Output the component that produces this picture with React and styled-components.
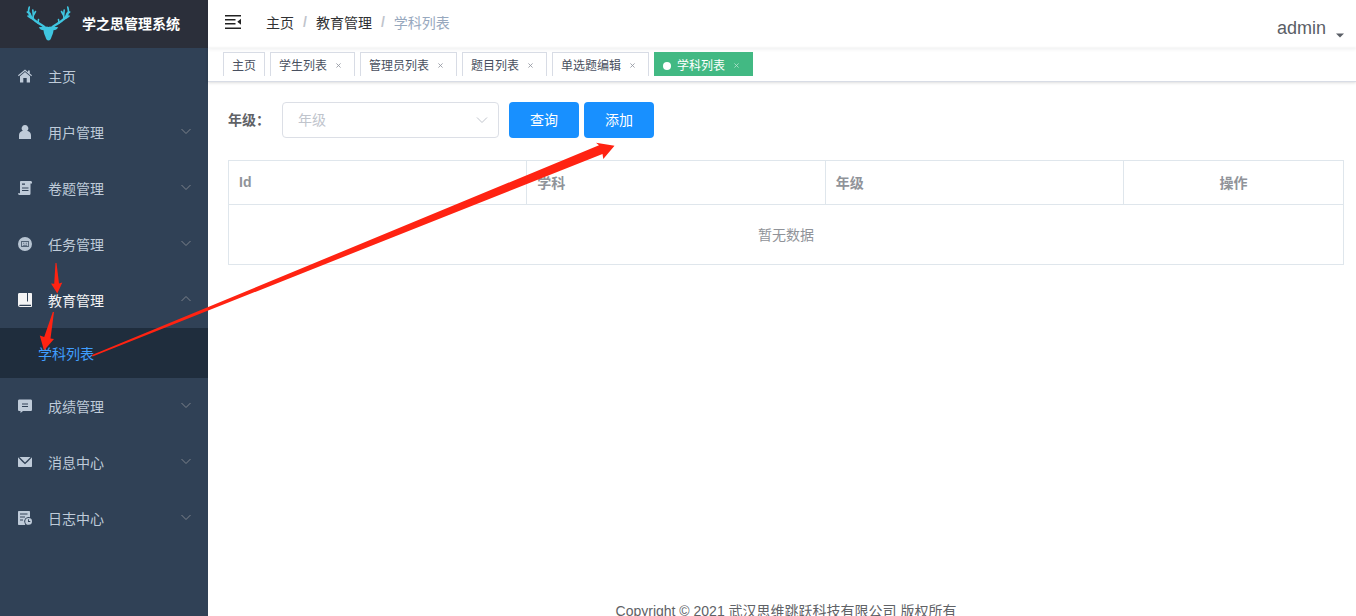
import { useState } from 'react'
import styled, { createGlobalStyle, ThemeProvider } from 'styled-components'

const theme = {
    colour: {
        sidebar: '#304156',
        sidebarDark: '#1f2d3d',
        logoBar: '#2b2f3a',
        menuText: '#bfcbd9',
        menuOpen: '#f4f4f5',
        link: '#409eff',
        primary: '#1890ff',
        tag: '#42b983',
        border: '#dfe6ec',
        inputBorder: '#dcdfe6',
        tagBorder: '#d8dce5',
        text: '#606266',
        muted: '#909399',
        placeholder: '#c0c4cc',
        arrow: '#ff2312',
    },
    sidebarWidth: '208px',
}

const GlobalStyle = createGlobalStyle`
    * {
        box-sizing: border-box;
    }
    body {
        margin: 0;
        background: #fff;
        color: #606266;
        font-family: 'Liberation Sans', 'Noto Sans CJK SC', sans-serif;
        font-size: 14px;
    }
    a {
        color: inherit;
        text-decoration: none;
    }
    button,
    select {
        font-family: inherit;
        font-size: 14px;
        cursor: pointer;
    }
`

const Layout = styled.div`
    position: relative;
    display: flex;
    height: 100vh;
    overflow: hidden;
`

//////////////////////////

// Sidebar

//////////////////////////

const Sidebar = styled.aside`
    flex: none;
    width: ${({ theme }) => theme.sidebarWidth};
    background: ${({ theme }) => theme.colour.sidebar};
`

const Brand = styled.a`
    display: flex;
    align-items: center;
    gap: 10px;
    height: 48px;
    padding-left: 24px;
    background: ${({ theme }) => theme.colour.logoBar};
    color: #fff;
    font-weight: bold;

    svg {
        width: 48px;
        height: 40px;
    }
    span {
        padding-bottom: 3px;
    }
`

const Menu = styled.ul`
    margin: 0;
    padding: 0;
    list-style: none;
`

const MenuButton = styled.button`
    display: flex;
    align-items: center;
    width: 100%;
    height: 56px;
    padding: 0 16px 0 18px;
    border: 0;
    background: none;
    color: ${({ theme, $open }) =>
        $open ? theme.colour.menuOpen : theme.colour.menuText};
    text-align: left;

    span {
        flex: 1;
        margin-left: 16px;
    }
`

const MenuIcon = styled.svg`
    flex: none;
    width: 14px;
    height: 14px;
    fill: currentColor;
`

const Chevron = styled.svg`
    flex: none;
    width: 12px;
    height: 12px;
    fill: none;
    stroke: ${({ theme }) => theme.colour.muted};
    stroke-width: 1;
    transform: ${({ $open }) => ($open ? 'rotate(180deg)' : 'none')};
`

const MenuChevron = styled(Chevron)`
    margin-bottom: 3px;
    opacity: 0.8;
`

const SubLink = styled.a`
    display: flex;
    align-items: center;
    height: 50px;
    padding-left: 38px;
    background: ${({ theme }) => theme.colour.sidebarDark};
    color: ${({ theme }) => theme.colour.link};
`

//////////////////////////

// Top bars

//////////////////////////

const Main = styled.div`
    flex: 1;
    min-width: 0;
`

const Navbar = styled.header`
    display: flex;
    align-items: center;
    height: 48px;
    padding: 0 12px 4px 17px;
    box-shadow: 0 1px 4px rgba(0, 21, 41, 0.08);
`

const Hamburger = styled.button`
    display: flex;
    padding: 0;
    border: 0;
    background: none;
    color: #222;

    svg {
        width: 16px;
        height: 16px;
        fill: currentColor;
    }
`

const Breadcrumb = styled.nav`
    display: flex;
    flex: 1;
    align-items: center;
    gap: 9px;
    margin-left: 25px;
    color: #303133;

    i {
        color: ${({ theme }) => theme.colour.placeholder};
        font-style: normal;
        font-weight: bold;
    }
    span {
        color: #97a8be;
    }
`

const UserMenu = styled.button`
    display: flex;
    align-items: flex-end;
    gap: 10px;
    padding: 12px 0 0;
    border: 0;
    background: none;
    color: #5a5e66;

    span {
        font-size: 18px;
        line-height: 20px;
    }
    svg {
        width: 8px;
        height: 5px;
        fill: currentColor;
    }
`

const TagsBar = styled.div`
    display: flex;
    gap: 5px;
    height: 34px;
    padding: 4px 15px 0;
    border-bottom: 1px solid ${({ theme }) => theme.colour.tagBorder};
    box-shadow:
        0 1px 3px 0 rgba(0, 0, 0, 0.12),
        0 0 3px 0 rgba(0, 0, 0, 0.04);
`

const Tag = styled.div`
    display: flex;
    align-items: center;
    height: 24px;
    padding: 2px 8px 0;
    border: 1px solid
        ${({ theme, $active }) =>
            $active ? theme.colour.tag : theme.colour.tagBorder};
    border-bottom: 0;
    background: ${({ theme, $active }) => ($active ? theme.colour.tag : '#fff')};
    color: ${({ $active }) => ($active ? '#fff' : '#495060')};
    font-size: 12px;
    line-height: 22px;
    white-space: nowrap;
`

const Dot = styled.i`
    width: 8px;
    height: 8px;
    margin-right: 6px;
    border-radius: 50%;
    background: #fff;
`

const CloseButton = styled.button`
    display: flex;
    align-items: center;
    justify-content: center;
    width: 16px;
    height: 16px;
    margin-left: 3px;
    padding: 0;
    border: 0;
    background: none;
    color: inherit;
    opacity: 0.6;

    svg {
        width: 5px;
        height: 5px;
        stroke: currentColor;
    }
`

//////////////////////////

// Page content

//////////////////////////

const Content = styled.main`
    min-height: calc(100vh - 99px);
    padding: 20px 12px 0 20px;
`

const SearchForm = styled.form`
    display: flex;
    align-items: center;
    margin-bottom: 22px;

    label {
        width: 54px;
        padding-bottom: 2px;
        font-weight: bold;
    }
`

const SelectBox = styled.div`
    position: relative;
    width: 217px;
    margin-right: 10px;

    select {
        width: 100%;
        height: 36px;
        padding: 0 30px 0 15px;
        appearance: none;
        border: 1px solid ${({ theme }) => theme.colour.inputBorder};
        border-radius: 4px;
        background: #fff;
        color: ${({ theme }) => theme.colour.placeholder};
    }
    svg {
        position: absolute;
        top: 12px;
        right: 11px;
        stroke: ${({ theme }) => theme.colour.placeholder};
        pointer-events: none;
    }
`

const PrimaryButton = styled.button`
    width: 70px;
    height: 36px;
    margin-right: 5px;
    padding: 0 0 2px;
    border: 0;
    border-radius: 4px;
    background: ${({ theme }) => theme.colour.primary};
    color: #fff;
`

const Table = styled.table`
    width: 100%;
    table-layout: fixed;
    border-collapse: collapse;
    color: ${({ theme }) => theme.colour.muted};

    th,
    td {
        padding: 0 10px 2px;
        border: 1px solid ${({ theme }) => theme.colour.border};
    }
    th {
        height: 44px;
        text-align: left;
    }
    th:last-child {
        width: 220px;
        text-align: center;
    }
    td {
        height: 60px;
        text-align: center;
    }
`

const Footer = styled.footer`
    padding-left: 8px;
    line-height: 24px;
    text-align: center;
`

const Arrows = styled.svg`
    position: absolute;
    top: 0;
    left: 0;
    width: 640px;
    height: 380px;
    fill: ${({ theme }) => theme.colour.arrow};
    pointer-events: none;
`

const icons = {
    home: (
        <>
            <path d="M7 .4 10 2.9V1.4h1.8v3L14 6.3l-.7.9L7 1.9.7 7.2 0 6.3z" />
            <path d="M7 3 12 7.2V13.4H8.7V9H5.3v4.4H2V7.2z" />
        </>
    ),
    user: (
        <path d="M7 0a3.3 3.3 0 0 1 2.2 5.8C11.8 6.5 13 8 13 10.500V14H1v-3.500C1 8 2.200 6.500 4.800 5.800A3.300 3.300 0 0 1 7 0z" />
    ),
    paper: (
        <path
            fillRule="evenodd"
            d="M3 0h9.500C13.500 0 14 .6 14 1.500V2.500h-1.500v10c0 1-.6 1.500-1.500 1.500H1.500C.5 14 0 13.500 0 12.300h2V1.200C2 .5 2.300 0 3 0zM4 2.500v1.200h3V2.500zM4 6.500v1h6.500v-1zM4 9v1h6.500V9z"
        />
    ),
    task: (
        <>
            <path
                fillRule="evenodd"
                d="M7 0a7 7 0 1 1 0 14A7 7 0 0 1 7 0zM3.300 4v6h7.400V4zm.7.700h6v4.600H4z"
                opacity=".95"
            />
            <path
                d="M5 5.800h1.300v1H5zM7.700 5.800H9v1H7.700zM4.800 8.400l1.400-1 1 .8 1-1 1 1.200v.5H4.800z"
                fill="#304156"
                opacity=".6"
            />
        </>
    ),
    book: (
        <path
            fillRule="evenodd"
            d="M1.500 0H13c.6 0 1 .4 1 1v12.200c0 .5-.3.800-.8.800H2.200C.8 14 0 13.200 0 12V1.500C0 .5.500 0 1.500 0zM9 0v8.500h1V0zM1.800 11.700c-.8 0-.8 1.200 0 1.200H13v-1.200z"
        />
    ),
    message: (
        <path
            fillRule="evenodd"
            d="M1.500.5h11c1 0 1.500.5 1.500 1.500v8.500c0 1-.5 1.500-1.500 1.500H5L2.500 14V12h-1C.5 12 0 11.500 0 10.500V2C0 1 .5.500 1.500.5zM4 4.500v1h6v-1zM4 7v1h6V7z"
        />
    ),
    mail: (
        <>
            <path d="M1.500 2 7 7.600 12.500 2z" />
            <path d="M0 2.300 4.200 6.800 7 9.200l2.800-2.400L14 2.300V11c0 .7-.3 1-1 1H1c-.7 0-1-.3-1-1z" />
        </>
    ),
    log: (
        <>
            <path
                fillRule="evenodd"
                d="M1 0h10c.6 0 1 .4 1 1v5.300a4.300 4.300 0 0 0-5.200 6.200L7.300 14H1c-.6 0-1-.4-1-1V1c0-.6.4-1 1-1zM2 2.500v1h7.500v-1zM2 5.500v1h5v-1zM2 8.500v1h3v-1z"
            />
            <path
                fillRule="evenodd"
                d="M10.600 7a3.400 3.400 0 1 1 0 6.800 3.400 3.400 0 0 1 0-6.800zM10 8.300v2.700h2.300v-.9h-1.400V8.300z"
            />
        </>
    ),
}

const menu = [
    { icon: 'home', label: '主页' },
    { icon: 'user', label: '用户管理', children: [] },
    { icon: 'paper', label: '卷题管理', children: [] },
    { icon: 'task', label: '任务管理', children: [] },
    { icon: 'book', label: '教育管理', children: ['学科列表'] },
    { icon: 'message', label: '成绩管理', children: [] },
    { icon: 'mail', label: '消息中心', children: [] },
    { icon: 'log', label: '日志中心', children: [] },
]

const tags = [
    '主页',
    '学生列表',
    '管理员列表',
    '题目列表',
    '单选题编辑',
    '学科列表',
]

const Antlers = () => (
    <svg viewBox="0 0 48 40" fill="none" stroke="#3fc6e0" aria-hidden="true">
        <g id="antler" strokeLinecap="round" strokeLinejoin="round">
            <path d="M22 24.500C18 19.500 8 18 5.500 9.500" strokeWidth="2.400" />
            <path
                d="M5.600 9.500 3.300 8M5.700 11C3.800 7.500 4.500 5 5.300 3M7.600 14.500 4 12M9 15.500C9.500 12 9.500 10 8.800 6M9.600 11 11.500 7.500M14 19 14.500 15.500"
                strokeWidth="1.600"
            />
        </g>
        <use href="#antler" transform="matrix(-1 0 0 1 49 0)" />
        <path
            fill="#3fc6e0"
            stroke="none"
            d="M14.800 23.300c3-.5 5.200-.2 6.700-.2 1-1 2-.8 3 0 1-.8 2-1 3 0 1.500 0 3.700-.3 6.700.2-1 2-2.600 2.900-4.700 2.900-.2 2.800-1.200 4.800-2 6.800-.4 2-1.400 3.300-3 3.500-1.600-.2-2.600-1.500-3-3.500-.8-2-1.800-4-2-6.800-2.100 0-3.700-.9-4.700-2.900z"
        />
    </svg>
)

const SidebarItem = ({ icon, label, children }) => {
    const [open, setOpen] = useState(label === '教育管理')
    return (
        <li>
            <MenuButton
                type="button"
                $open={open}
                onClick={() => children && setOpen(!open)}
            >
                <MenuIcon viewBox="0 0 14 14">{icons[icon]}</MenuIcon>
                <span>{label}</span>
                {children && (
                    <MenuChevron viewBox="0 0 12 12" $open={open}>
                        <path d="M1.500 4 6 8.500 10.500 4" />
                    </MenuChevron>
                )}
            </MenuButton>
            {open &&
                children?.map((name) => (
                    <SubLink key={name} href="#subject">
                        {name}
                    </SubLink>
                ))}
        </li>
    )
}

const TagItem = ({ label, active, closable }) => (
    <Tag $active={active}>
        {active && <Dot />}
        <a href="#tag">{label}</a>
        {closable && (
            <CloseButton type="button" aria-label={`关闭${label}`}>
                <svg viewBox="0 0 6 6">
                    <path d="M.5.500 5.500 5.500M5.500.500.500 5.500" />
                </svg>
            </CloseButton>
        )}
    </Tag>
)

export default function App() {
    return (
        <ThemeProvider theme={theme}>
            <GlobalStyle />
            <Layout>
                <Sidebar>
                    <Brand href="#home">
                        <Antlers />
                        <span>学之思管理系统</span>
                    </Brand>
                    <Menu>
                        {menu.map((item) => (
                            <SidebarItem key={item.label} {...item} />
                        ))}
                    </Menu>
                </Sidebar>
                <Main>
                    <Navbar>
                        <Hamburger type="button" aria-label="菜单">
                            <svg viewBox="0 0 16 16">
                                <path d="M0 1h16v1.500H0zM0 5h10.500v1.500H0zM0 9h10.500v1.500H0zM0 13.500h16V15H0zM16 4.800v6L12.300 7.800z" />
                            </svg>
                        </Hamburger>
                        <Breadcrumb>
                            <a href="#home">主页</a>
                            <i>/</i>
                            <a href="#education">教育管理</a>
                            <i>/</i>
                            <span>学科列表</span>
                        </Breadcrumb>
                        <UserMenu type="button">
                            <span>admin</span>
                            <svg viewBox="0 0 8 5">
                                <path d="M0 .5h8L4 4.500z" />
                            </svg>
                        </UserMenu>
                    </Navbar>
                    <TagsBar>
                        {tags.map((label, i) => (
                            <TagItem
                                key={label}
                                label={label}
                                closable={i > 0}
                                active={i === tags.length - 1}
                            />
                        ))}
                    </TagsBar>
                    <Content>
                        <SearchForm onSubmit={(e) => e.preventDefault()}>
                            <label htmlFor="level">年级：</label>
                            <SelectBox>
                                <select id="level">
                                    <option>年级</option>
                                </select>
                                <Chevron viewBox="0 0 12 12">
                                    <path d="M1 3.500 6 8.500 11 3.500" />
                                </Chevron>
                            </SelectBox>
                            <PrimaryButton type="submit">查询</PrimaryButton>
                            <PrimaryButton type="button">添加</PrimaryButton>
                        </SearchForm>
                        <Table>
                            <thead>
                                <tr>
                                    <th>Id</th>
                                    <th>学科</th>
                                    <th>年级</th>
                                    <th>操作</th>
                                </tr>
                            </thead>
                            <tbody>
                                <tr>
                                    <td colSpan={4}>暂无数据</td>
                                </tr>
                            </tbody>
                        </Table>
                    </Content>
                    <Footer>
                        Copyright © 2021 武汉思维跳跃科技有限公司 版权所有
                    </Footer>
                </Main>
                <Arrows viewBox="0 0 640 380" aria-hidden="true">
                    <path d="M55.500 263h1l2.500 20.500 3.300-1L57.300 293.500 51 283.500l3.200.3z" />
                    <path d="M52.800 312h1.200L50.500 338.500l3.500.500-10 11.500L39.800 335.500l4.400 1.500z" />
                    <path d="M92.500 356.500 92 355 599 145.300 596 142.700 614.500 145.800 603.300 159 602.500 154z" />
                </Arrows>
            </Layout>
        </ThemeProvider>
    )
}
